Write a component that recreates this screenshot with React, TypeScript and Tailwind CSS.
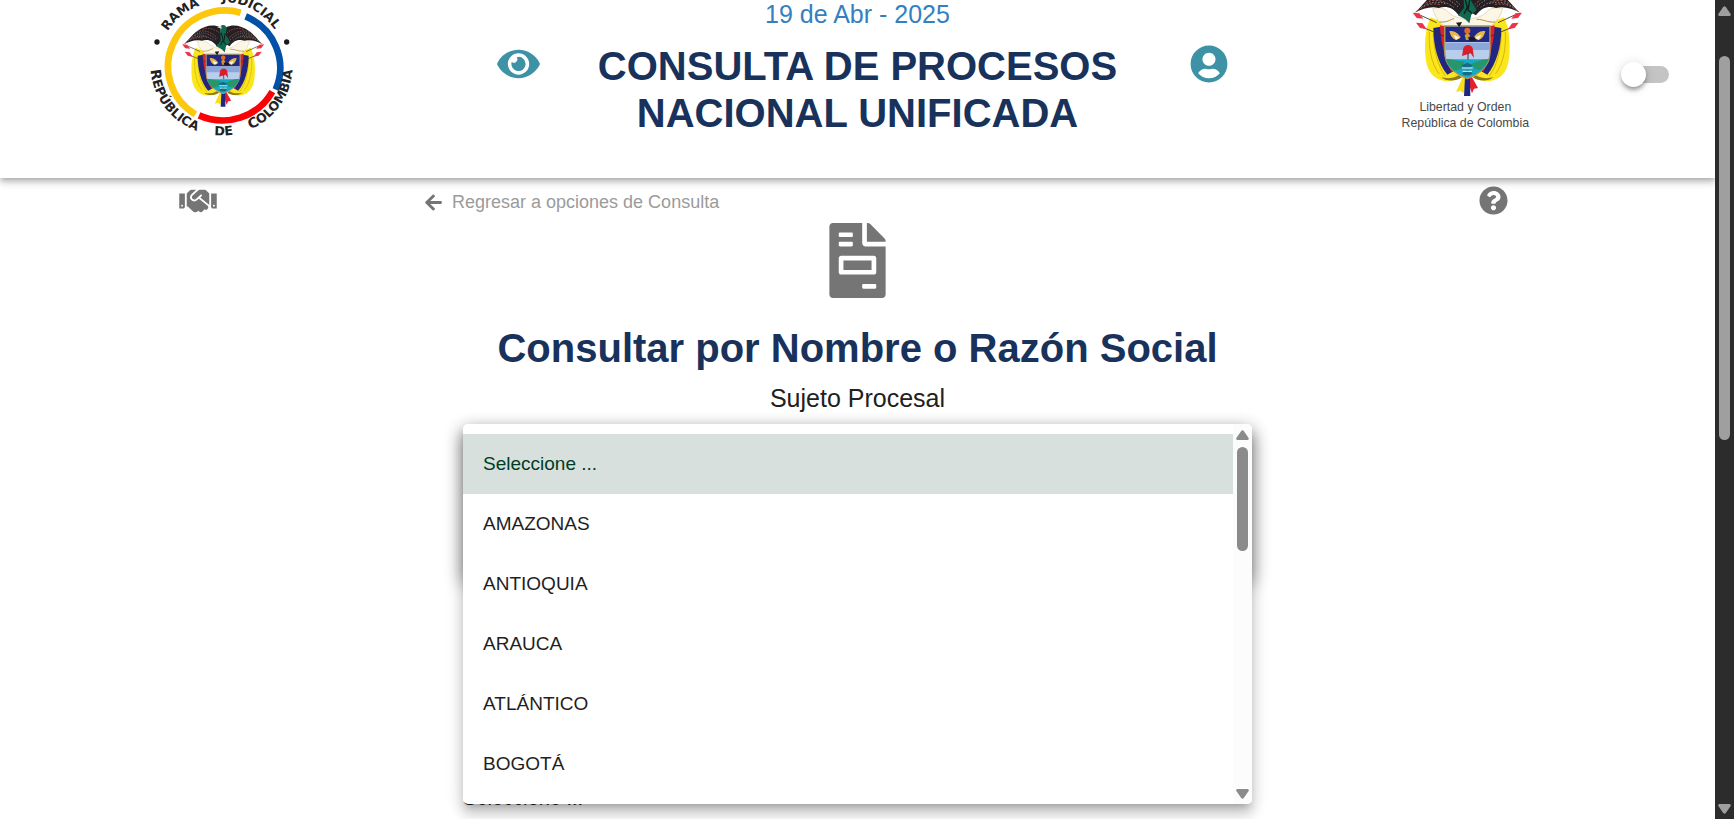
import { useState } from "react";
import {
  FaArrowLeft,
  FaEye,
  FaFileInvoice,
  FaHandshake,
  FaQuestionCircle,
  FaUserCircle,
} from "react-icons/fa";

const departments = [
  "Seleccione ...",
  "AMAZONAS",
  "ANTIOQUIA",
  "ARAUCA",
  "ATLÁNTICO",
  "BOGOTÁ",
];

function FlagSide() {
  return (
    <g>
      <path
        d="M152 52C134 88 132 140 138 182C143 214 160 236 190 242C212 245 232 240 248 230L196 70Z"
        fill="#fbe51b"
      />
      <path
        d="M148 95C146 140 152 190 178 222M160 100C162 150 172 195 196 228"
        stroke="#d8b70c"
        strokeWidth="3"
        fill="none"
      />
      <path d="M160 84C160 140 174 190 202 224L220 214C198 180 186 130 182 80Z" fill="#22267f" />
      <path d="M180 76C182 130 196 178 214 216L232 206L200 80Z" fill="#e2202c" />
      <path d="M184 232C200 246 228 244 246 232L236 226C220 236 200 236 184 232Z" fill="#8f7a1c" />
      <path d="M128 82L196 110M122 46L170 68" stroke="#3a2c22" strokeWidth="2.5" />
      <path d="M108 68L128 70L140 88L120 84Z" fill="#ee3344" />
      <path d="M98 38L118 40L130 56L110 54Z" fill="#ee3344" />
    </g>
  );
}

function WingSide() {
  return (
    <g>
      <path
        d="M104 38C124 22 136 0 160 -16C188 -36 222 -44 250 -30L258 34L236 46C218 20 196 18 176 24C152 18 128 26 104 38Z"
        fill="#231f22"
      />
      <path
        d="M112 33C134 14 156 8 182 14M136 10C160 -6 190 0 222 22M156 -10C184 -22 214 -12 240 14M180 -22C206 -30 228 -22 246 -8"
        stroke="#a8524f"
        strokeWidth="3"
        fill="none"
        strokeDasharray="7 4"
      />
      <path
        d="M124 22C146 6 170 2 200 12M148 0C176 -14 206 -6 234 20"
        stroke="#8b9492"
        strokeWidth="3"
        fill="none"
        strokeDasharray="4 5"
      />
    </g>
  );
}

function CoatOfArms() {
  return (
    <g>
      <FlagSide />
      <g transform="translate(524 0) scale(-1 1)">
        <FlagSide />
      </g>
      <path d="M250 228L228 276L242 272L250 280L262 240Z" fill="#f7df1c" />
      <path d="M274 228L294 264L282 266L276 280L262 240Z" fill="#e5202b" />
      <path d="M255 232L252 288H271L270 232Z" fill="#22267f" />
      <path
        d="M158 26C176 20 196 24 206 38C226 56 244 52 262 62C280 52 298 56 318 38C328 24 348 20 368 26C362 46 352 62 338 74L324 80H200L186 74C172 62 164 46 158 26Z"
        fill="#fbf6e6"
        stroke="#dccb9c"
        strokeWidth="2"
      />
      <path
        d="M178 66C204 68 210 58 222 56M346 66C320 68 314 58 290 58"
        stroke="#b59138"
        strokeWidth="3"
        fill="none"
      />
      <WingSide />
      <g transform="translate(524 0) scale(-1 1)">
        <WingSide />
      </g>
      <path
        d="M250 -34C260 -42 272 -40 276 -28L272 0L290 30L274 44L268 70L256 58L234 46L252 24Z"
        fill="#12684f"
      />
      <path d="M254 -8L262 22L252 42M270 -6L264 30L276 40" stroke="#071f1b" strokeWidth="4" fill="none" />
      <path d="M238 -30L254 -36L256 -24Z" fill="#e8ddd6" />
      <path
        d="M194 78H330V156C330 196 298 222 262 236C226 222 194 196 194 156Z"
        fill="#b9cdec"
        stroke="#ad9558"
        strokeWidth="4"
      />
      <path d="M196 80H328V126H196Z" fill="#202a86" />
      <path d="M196 128H328V150H196Z" fill="#8ba7da" />
      <path d="M198 178H326C318 206 290 224 262 234C234 224 206 206 198 178Z" fill="#18a8c4" />
      <path d="M198 178C216 176 234 186 254 184L244 206L222 212C210 202 202 192 198 178Z" fill="#27966b" />
      <path d="M326 178C308 176 290 186 272 192L286 208L302 210C314 202 322 190 326 178Z" fill="#27966b" />
      <path d="M244 196L262 188L278 196L272 202H250ZM246 220L262 210L278 220L270 226H252Z" fill="#176b83" />
      <path d="M246 204H278M248 214H276" stroke="#d9f4fa" strokeWidth="3" />
      <path
        d="M208 94C220 90 236 100 242 112C234 124 216 124 208 94ZM316 94C304 90 288 100 282 112C290 124 308 124 316 94Z"
        fill="#e6b84b"
      />
      <path d="M220 104L238 112L228 120ZM304 104L286 112L296 120Z" fill="#fff7e8" />
      <circle cx="262" cy="92" r="9" fill="#e2672a" />
      <path d="M254 106L262 98L270 106L266 120H258Z" fill="#cf9a35" />
      <path d="M264 112H284L288 122H268Z" fill="#17162b" />
      <path d="M228 68L246 66L238 82Z" fill="#1c1a1c" />
      <path d="M250 144C256 132 272 132 278 144L282 174L272 160L246 168Z" fill="#da1f2c" />
      <path d="M264 160V178" stroke="#4d3126" strokeWidth="3" />
    </g>
  );
}

function JudicialLogo() {
  return (
    <svg
      viewBox="0 0 570 450"
      className="h-[150px] w-[190px] shrink-0"
      role="img"
      aria-label="Rama Judicial República de Colombia"
    >
      <defs>
        <path id="upperArc" d="M83 197A192 192 0 0 1 467 197" />
        <path id="lowerArc" d="M62 197A213 209 0 0 0 488 197" />
      </defs>
      <g fill="none" strokeWidth="20">
        <path d="M332 38A171 168 0 0 0 196 343" stroke="#fdc70c" />
        <path d="M347 49A171 168 0 0 1 437 269" stroke="#0350a8" />
        <path d="M427 275A171 168 0 0 1 207 346" stroke="#fb0207" />
      </g>
      <circle cx="81" cy="126" r="8" fill="#1b1b1b" />
      <circle cx="470" cy="126" r="8" fill="#1b1b1b" />
      <g
        fill="#222"
        fontFamily="'DejaVu Sans', sans-serif"
        fontWeight="700"
        fontSize="38"
      >
        <text>
          <textPath href="#upperArc" startOffset="18%">RAMA</textPath>
        </text>
        <text>
          <textPath href="#upperArc" startOffset="81%" textAnchor="end">JUDICIAL</textPath>
        </text>
        <text>
          <textPath href="#lowerArc" startOffset="2%">
            <tspan fontSize="42">R</tspan>EPÚBLICA
          </textPath>
        </text>
        <text>
          <textPath href="#lowerArc" startOffset="51%" textAnchor="middle">DE</textPath>
        </text>
        <text>
          <textPath href="#lowerArc" startOffset="98%" textAnchor="end">
            <tspan fontSize="42">C</tspan>OLOMBIA
          </textPath>
        </text>
      </g>
      <g transform="translate(83 104) scale(.75)">
        <CoatOfArms />
      </g>
    </svg>
  );
}

function NationalEmblem() {
  return (
    <svg
      viewBox="0 0 570 450"
      className="h-[150px] w-[190px] shrink-0"
      role="img"
      aria-label="Libertad y Orden, República de Colombia"
    >
      <CoatOfArms />
      <g fill="#484848" fontFamily="'Liberation Sans', sans-serif" fontSize="37" textAnchor="middle">
        <text x="256" y="334">Libertad y Orden</text>
        <text x="256" y="382">República de Colombia</text>
      </g>
    </svg>
  );
}

function Arrow({ down = false }: { down?: boolean }) {
  return (
    <svg viewBox="0 0 13 10" className="h-[10px] w-[13px] fill-current" aria-hidden="true">
      <path
        d={
          down
            ? "M1.4 0H11.6Q13.4 .4 12.6 2L7.8 9Q6.5 10.6 5.2 9L.4 2Q-.4 .4 1.4 0Z"
            : "M1.4 10H11.6Q13.4 9.6 12.6 8L7.8 1Q6.5 -.6 5.2 1L.4 8Q-.4 9.6 1.4 10Z"
        }
      />
    </svg>
  );
}

function ThemeSwitch() {
  return (
    <label className="relative mt-[62px] block h-[25px] w-12 shrink-0 cursor-pointer">
      <input type="checkbox" role="switch" className="peer sr-only" aria-label="Tema oscuro" />
      <span className="absolute top-1 right-0 h-[17px] w-[43px] rounded-full bg-[#c4c4c4]" />
      <span className="absolute top-0 left-0 size-[25px] rounded-full bg-white shadow-[0_4px_5px_-2px_rgba(0,0,0,.3),0_3px_4px_rgba(0,0,0,.16),0_1px_12px_rgba(0,0,0,.14)] peer-checked:left-[23px]" />
    </label>
  );
}

function Header() {
  return (
    <header className="relative z-10 grid grid-cols-12 bg-white pb-7 shadow-[0_2px_5px_-1px_rgba(0,0,0,.2),0_5px_6px_rgba(0,0,0,.14),0_1px_12px_rgba(0,0,0,.12)]">
      <div className="col-span-3 pl-[130px]">
        <JudicialLogo />
      </div>
      <div className="col-span-6 grid grid-cols-[1fr_auto_1fr] items-start">
        <div className="flex pt-[45px] pl-[68px]">
          <button type="button" aria-label="Ver" className="text-[#3d92a6]">
            <FaEye className="h-[38px] w-[43px]" />
          </button>
        </div>
        <div className="text-center">
          <p className="text-[25px] leading-7 text-[#337fbf]">19 de Abr - 2025</p>
          <h1 className="mt-[15px] text-[40px] leading-[47px] font-bold text-[#18325c]">
            CONSULTA DE PROCESOS
            <br />
            NACIONAL UNIFICADA
          </h1>
        </div>
        <div className="flex justify-end pt-[45px] pr-[58px]">
          <button type="button" aria-label="Usuario" className="text-[#3d92a6]">
            <FaUserCircle className="size-[38px]" />
          </button>
        </div>
      </div>
      <div className="col-span-3 flex justify-between pr-[46px] pl-[94px]">
        <NationalEmblem />
        <ThemeSwitch />
      </div>
    </header>
  );
}

function DepartmentMenu() {
  const [selected, setSelected] = useState(departments[0]);
  return (
    <div className="absolute inset-x-0 top-0 z-20 rounded-[5px] shadow-[0_6px_6px_-4px_rgba(0,0,0,.2),0_10px_12px_1px_rgba(0,0,0,.14),0_4px_17px_2px_rgba(0,0,0,.12)]">
      <div className="flex overflow-hidden rounded-[5px] bg-white">
        <div role="listbox" aria-label="Departamento" className="flex-1 py-[10px]">
          {departments.map((name) => (
            <button
              key={name}
              type="button"
              role="option"
              aria-selected={name === selected}
              onClick={() => setSelected(name)}
              className="flex h-[60px] w-full items-center px-5 text-left text-[19px] text-[#1f1f1f] aria-selected:bg-[#d7e0dc] aria-selected:text-[#003c25]"
            >
              {name}
            </button>
          ))}
        </div>
        <div className="flex w-[19px] flex-col items-center bg-[#fcfcfc] pt-[6px] pb-[5px] text-[#8b8b8b]">
          <Arrow />
          <div className="mt-[7px] h-[104px] w-[11px] rounded-full bg-[#8b8b8b]" />
          <div className="mt-auto">
            <Arrow down />
          </div>
        </div>
      </div>
    </div>
  );
}

export default function App() {
  return (
    <div className="flex h-screen overflow-hidden bg-white font-['Liberation_Sans',Arial,sans-serif] text-[#212121]">
      <div className="min-w-0 flex-1 overflow-hidden">
        <Header />
        <main>
          <div className="flex h-[45px] items-center pr-[207px] pl-[179px] text-[#757575]">
            <button type="button" aria-label="Acuerdos">
              <FaHandshake className="h-[30px] w-[38px]" />
            </button>
            <a href="#opciones" className="ml-[208px] flex items-center gap-[10px] pt-1 text-[18px]">
              <FaArrowLeft className="h-[19px] w-[17px]" />
              <span className="text-[#9b9b9b]">Regresar a opciones de Consulta</span>
            </a>
            <button type="button" aria-label="Ayuda" className="ml-auto">
              <FaQuestionCircle className="size-[29px]" />
            </button>
          </div>
          <FaFileInvoice className="mx-auto h-[75px] w-[57px] text-[#757575]" />
          <h2 className="mt-[26px] text-center text-[40px] leading-12 font-bold text-[#18325c]">
            Consultar por Nombre o Razón Social
          </h2>
          <p className="mt-3 text-center text-[25px] leading-7">Sujeto Procesal</p>
          <div className="relative mx-auto mt-3 w-[46%]">
            <div className="h-[151px] rounded-[5px] shadow-[0_8px_18px_1px_rgba(0,0,0,.4)]" />
            <p className="mt-[211px] text-xl leading-6">Seleccione ...</p>
            <DepartmentMenu />
          </div>
        </main>
      </div>
      <div className="flex w-[19px] shrink-0 flex-col items-center bg-[#2c2c2c] pt-[6px] pb-[5px] text-[#9f9f9f]">
        <Arrow />
        <div className="mt-10 h-[384px] w-[11px] rounded-full bg-[#9f9f9f]" />
        <div className="mt-auto">
          <Arrow down />
        </div>
      </div>
    </div>
  );
}
